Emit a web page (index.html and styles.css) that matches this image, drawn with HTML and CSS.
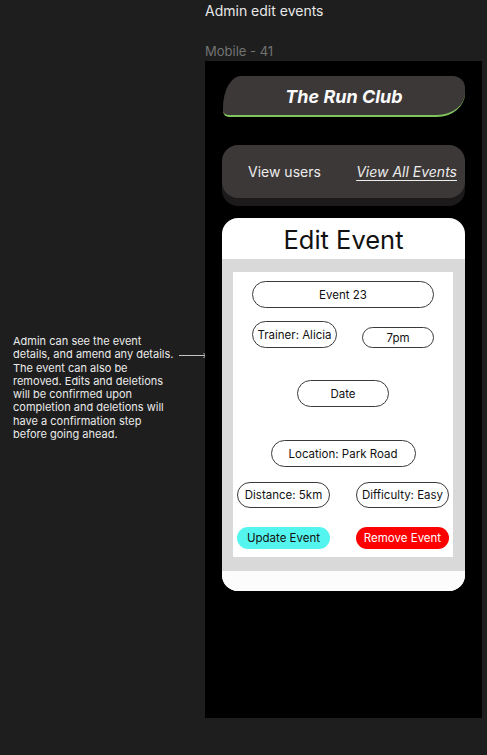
FILE: index.html
```html
<!DOCTYPE html>
<html lang="en">
<head>
    <meta charset="UTF-8">
    <meta name="viewport" content="width=device-width, initial-scale=1.0">
    <title>Admin edit events</title>
    <link rel="stylesheet" href="styles.css">
</head>
<body>
    <div class="canvas">
        <aside class="note">
            <p>Admin can see the event<br>details, and amend any details.<svg class="arrow" width="30" height="8" viewBox="0 0 30 8"><path d="M1 4.5H28M25.5 2l2.5 2.5-2.5 2.5" fill="none" stroke="#c4c4c4" stroke-width="1"/></svg><br>The event can also be<br>removed. Edits and deletions<br>will be confirmed upon<br>completion and deletions will<br>have a confirmation step<br>before going ahead.</p>
        </aside>

        <section class="board">
            <h1 class="board-title">Admin edit events</h1>
            <div class="frame-label">Mobile - 41</div>

            <div class="frame">
                <div class="brand">The Run Club</div>

                <nav class="nav">
                    <a class="nav-link">View users</a>
                    <a class="nav-link active">View All Events</a>
                </nav>

                <div class="card">
                    <h2 class="card-title">Edit Event</h2>
                    <div class="card-body">
                        <div class="panel">
                            <div class="pill pill-name">Event 23</div>
                            <div class="row row-trainer">
                                <div class="pill pill-trainer">Trainer: Alicia</div>
                                <div class="pill pill-time">7pm</div>
                            </div>
                            <div class="pill pill-date">Date</div>
                            <div class="pill pill-location">Location: Park Road</div>
                            <div class="row row-wide">
                                <div class="pill pill-half">Distance: 5km</div>
                                <div class="pill pill-half">Difficulty: Easy</div>
                            </div>
                            <div class="row row-wide row-actions">
                                <button class="action update">Update Event</button>
                                <button class="action remove">Remove Event</button>
                            </div>
                        </div>
                    </div>
                    <div class="card-foot"></div>
                </div>
            </div>
        </section>
    </div>
</body>
</html>
```

FILE: styles.css
```css
:root {
    --canvas-bg: #1e1e1e;
    --frame-bg: #000000;
    --pill-dark: #3c3838;
    --text-light: #ececec;
    --muted: #737373;
    --line: #3a3a3a;
    --gray-bg: #d9d9d9;
    --cyan: #55f5ef;
    --red: #ff0000;
}
body {
    margin: 0;
    background: var(--canvas-bg);
    font-family: 'Inter', 'Noto Sans', sans-serif;
    color: var(--text-light);
    height: 755px;
    overflow: hidden;
}
.canvas {
    display: grid;
    grid-template-columns: 192px 277px;
    padding-left: 13px;
}
.note p {
    margin: 335px 0 0;
    font-size: 11px;
    line-height: 13.3px;
    color: #eaeaea;
    white-space: nowrap;
}
.arrow {
    vertical-align: middle;
    margin-left: 4px;
}
.board-title {
    margin: 2px 0 0;
    font-size: 14px;
    font-weight: 400;
    line-height: 17px;
    color: #e8e8e8;
}
.frame-label {
    margin-top: 24px;
    font-size: 13px;
    line-height: 16px;
    color: var(--muted);
}
.frame {
    margin-top: 2px;
    height: 657px;
    background: var(--frame-bg);
    padding: 15px 17px 0 17px;
    box-sizing: border-box;
}
.brand {
    margin-left: 1px;
    height: 39px;
    background: var(--pill-dark);
    border-bottom: 2px solid #7fc35c;
    border-radius: 18px 12px 28px 6px / 32px 12px 24px 6px;
    text-align: center;
    line-height: 41px;
    font-size: 18px;
    font-weight: 700;
    font-style: italic;
    color: #fafafa;
}
.nav {
    margin-top: 28px;
    height: 53px;
    background: var(--pill-dark);
    border-radius: 16px;
    box-shadow: 0 8px 0 #1c1a1a;
    display: flex;
    justify-content: space-between;
    align-items: center;
    padding: 0 8px 0 26px;
}
.nav-link {
    font-size: 14px;
    color: var(--text-light);
}
.nav-link.active {
    font-style: italic;
    text-decoration: underline;
    text-underline-offset: 3px;
}
.card {
    margin-top: 20px;
    background: #ffffff;
    border-radius: 16px;
    overflow: hidden;
    color: #111;
}
.card-title {
    margin: 0;
    height: 41px;
    line-height: 43px;
    text-align: center;
    font-size: 25.5px;
    font-weight: 400;
}
.card-body {
    background: var(--gray-bg);
    padding: 13px 12px 14px 11px;
}
.panel {
    background: #ffffff;
    height: 285px;
    box-sizing: border-box;
    padding: 9px 4px 0;
    display: flex;
    flex-direction: column;
    align-items: center;
}
.card-foot {
    height: 20px;
    background: #fcfcfc;
}
.pill {
    box-sizing: border-box;
    border: 1px solid var(--line);
    border-radius: 14px;
    height: 27px;
    display: flex;
    align-items: center;
    justify-content: center;
    font-size: 11.5px;
    color: #111;
    white-space: nowrap;
}
.row {
    display: flex;
    align-items: flex-end;
    justify-content: space-between;
}
.pill-name { width: 182px; }
.row-trainer {
    width: 182px;
    margin-top: 13px;
}
.pill-trainer { width: 85px; height: 27px; }
.pill-time { width: 72px; height: 21px; border-radius: 11px; }
.pill-date { width: 92px; margin-top: 32px; }
.pill-location { width: 145px; margin-top: 33px; }
.row-wide {
    width: 212px;
    margin-top: 15px;
}
.pill-half { width: 93px; height: 26px; }
.row-actions { margin-top: 19px; }
.action {
    width: 93px;
    height: 22px;
    border: none;
    border-radius: 11px;
    font-family: inherit;
    font-size: 11.5px;
    padding: 0;
}
.update {
    background: var(--cyan);
    color: #111;
}
.remove {
    background: var(--red);
    color: #ffffff;
}
```
